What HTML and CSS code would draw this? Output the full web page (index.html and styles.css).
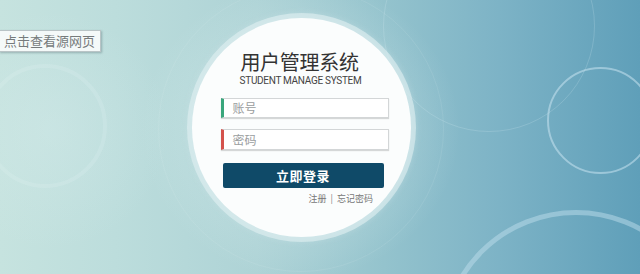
FILE: index.html
```html
<!DOCTYPE html>
<html lang="zh-CN">
<head>
<meta charset="utf-8">
<title>用户管理系统</title>
<link rel="stylesheet" href="styles.css">
</head>
<body>
<div class="stage">
  <span class="ring ring-left"></span>
  <span class="ring ring-right"></span>
  <span class="ring ring-bottom"></span>
  <span class="ring ring-faint"></span>
  <span class="ring ring-halo"></span>

  <a class="source-tag" href="#">点击查看源网页</a>

  <main class="login">
    <h1 class="title">用户管理系统</h1>
    <p class="subtitle">STUDENT MANAGE SYSTEM</p>
    <div class="field field-user"><span class="placeholder">账号</span></div>
    <div class="field field-pass"><span class="placeholder">密码</span></div>
    <button class="submit" type="button">立即登录</button>
    <div class="links"><a href="#">注册</a><span class="sep">|</span><a href="#">忘记密码</a></div>
  </main>
</div>
</body>
</html>
```
FILE: styles.css
```css
* { box-sizing: border-box; }
html, body { margin: 0; padding: 0; }
body {
  width: 640px;
  height: 274px;
  overflow: hidden;
  font-family: "Noto Sans CJK SC", "Noto Sans", sans-serif;
}
.stage {
  position: relative;
  width: 640px;
  height: 274px;
  overflow: hidden;
  padding: 18px 0 0 192px;
  background:
    radial-gradient(ellipse 160px 150px at 300px 130px, rgba(225,242,242,0.5), rgba(225,242,242,0) 100%),
    radial-gradient(ellipse 120px 120px at 50px 130px, rgba(215,236,236,0.35), rgba(215,236,236,0) 100%),
    linear-gradient(90deg, #c6e3df 0%, #bcdddc 18%, #aed3d6 40%, #94c3cd 60%, #7db3c6 78%, #5f9fb9 100%);
}
.ring {
  position: absolute;
  border-radius: 50%;
  pointer-events: none;
}
.ring-left {
  left: -17px; top: 64px; width: 124px; height: 124px;
  border: 4px solid rgba(235,248,248,0.16);
}
.ring-right {
  left: 547px; top: 67px; width: 107px; height: 107px;
  border: 2.5px solid rgba(200,228,240,0.55);
}
.ring-bottom {
  left: 440px; top: 210px; width: 272px; height: 272px;
  border: 5px solid rgba(190,222,236,0.5);
}
.ring-faint {
  left: 383px; top: -80px; width: 212px; height: 212px;
  border: 1px solid rgba(230,245,250,0.18);
}
.ring-halo {
  left: 158px; top: -14px; width: 286px; height: 286px;
  border: 1px solid rgba(235,248,248,0.1);
}
.source-tag {
  position: absolute;
  left: -1px; top: 30px;
  width: 102px; height: 22px;
  padding: 0 0 0 4px;
  font-size: 13px;
  line-height: 20px;
  color: #767b7c;
  text-decoration: none;
  background: rgba(250,252,252,0.9);
  border: 1px solid #b9c4c6;
  box-shadow: 1px 1px 2px rgba(60,80,90,0.35);
  z-index: 2;
}
.login {
  position: relative;
  z-index: 1;
  width: 219px;
  height: 219px;
  border-radius: 50%;
  background: #fbfdfd;
  box-shadow: 0 0 0 5px rgba(225,240,242,0.6), 0 0 6px 5px rgba(200,225,230,0.4);
  display: flex;
  flex-direction: column;
  align-items: center;
  padding-top: 34px;
}
.title {
  margin: 0 4px 0 0;
  font-family: "Liberation Sans", "Noto Sans CJK SC", sans-serif;
  font-size: 20px;
  line-height: 23px;
  font-weight: 400;
  color: #333;
  letter-spacing: -0.3px;
}
.subtitle {
  margin: 0 2px 0 0;
  font-family: Roboto, "Noto Sans", sans-serif;
  font-size: 10px;
  line-height: 12px;
  letter-spacing: -0.3px;
  color: #444;
}
.field {
  width: 168px;
  height: 20px;
  margin: 11px 0 0 6px;
  background: #fff;
  border: 1px solid #d3d6d7;
  box-shadow: 0 1px 1px rgba(0,0,0,0.15);
  display: flex;
  align-items: center;
  padding-left: 9px;
}
.field-user { border-left: 3px solid #3aa67c; }
.field-pass { margin-top: 11px; height: 21px; border-left: 3px solid #d4524c; }
.placeholder {
  font-size: 12px;
  line-height: 16px;
  color: #9a9d9e;
}
.submit {
  width: 161px;
  height: 25px;
  margin: 13px 0 0 3px;
  padding: 0;
  border: 0;
  border-radius: 2px;
  background: #0f4a68;
  color: #fff;
  font-family: "Noto Sans CJK SC", sans-serif;
  font-size: 13px;
  font-weight: 700;
  letter-spacing: 0.5px;
  line-height: 25px;
}
.links {
  align-self: flex-end;
  margin: 5px 38px 0 0;
  font-size: 9px;
  line-height: 12px;
  color: #777;
}
.links a { color: #777; text-decoration: none; }
.sep { margin: 0 4px; color: #888; }
```
